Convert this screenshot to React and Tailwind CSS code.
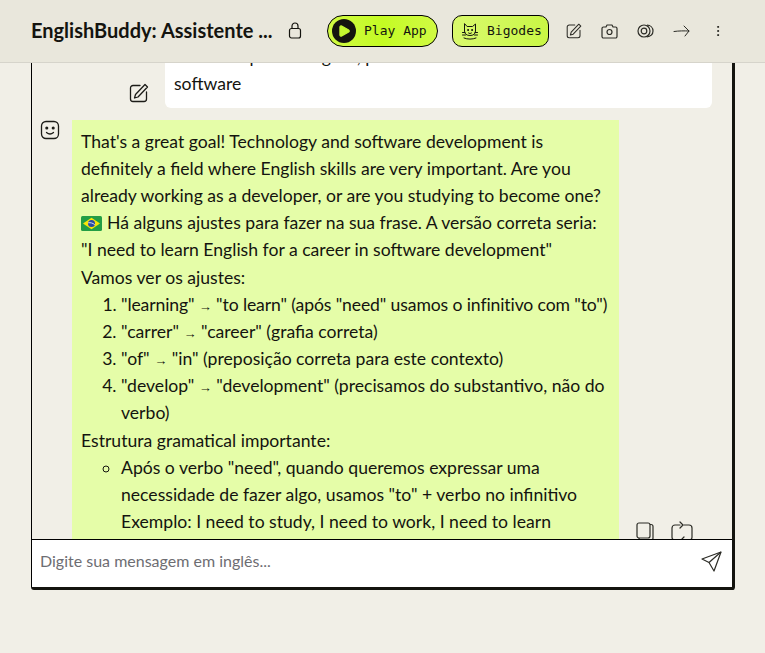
import React from "react";
import { EllipsisVertical, Play } from "lucide-react";

const font = "font-['Lato','Noto_Sans',sans-serif]";

const Line = ({ children, className = "" }) => (
  <div className={"h-[27px] whitespace-nowrap " + className}>{children}</div>
);

const Arrow = () => <span className="text-[13px] leading-none font-['Liberation_Sans',sans-serif]">→</span>;

const Flag = () => (
  <svg width="21" height="15" viewBox="0 0 21 15" className="inline-block mr-[5px] -mt-[3px] align-middle">
    <rect width="21" height="15" rx="1.500" fill="#229e45" />
    <path d="M10.500 1.800 19 7.500 10.500 13.200 2 7.500z" fill="#f8e509" />
    <circle cx="10.500" cy="7.500" r="3.500" fill="#2b49a3" />
    <path d="M7.200 6.800c2.400-.4 4.600.3 6.500 1.800" stroke="#fff" strokeWidth=".8" fill="none" />
  </svg>
);

const Cat = () => (
  <svg width="16" height="17" viewBox="0 0 16 17" fill="none" stroke="#14140f" strokeWidth="1" strokeLinejoin="round" strokeLinecap="round">
    <path d="M2.500 1v7c0 3 2.300 4.500 5.500 4.500s5.500-1.500 5.500-4.500V1l-3 2.500h-5z" />
    <path d="M.5 9.500h2.500M13 9.500h2.500M.5 12h3M12.500 12h3" />
    <circle cx="6" cy="7" r=".5" fill="#14140f" />
    <circle cx="10" cy="7" r=".5" fill="#14140f" />
    <path d="M6.500 10c.8.700 2.200.700 3 0M2 15c3.500 1.500 8.500 1.500 12 0" />
  </svg>
);

const LockIcon = () => (
  <svg width="14" height="17" viewBox="0 0 14 17" fill="none" stroke="#14140f" strokeWidth="1.200">
    <rect x="1.500" y="6.500" width="11" height="9.500" rx="2" />
    <path d="M4 6.500V4a3 3 0 0 1 6 0v2.500" />
  </svg>
);

const Pen = ({ size = 16, stroke = "#2c2c26", width = 1.300 }) => (
  <svg width={size} height={size} viewBox="0 0 20 20" fill="none" stroke={stroke} strokeWidth={width} strokeLinejoin="round" strokeLinecap="round">
    <path d="M11 2.500H4a2.500 2.500 0 0 0-2.500 2.500v11A2.500 2.500 0 0 0 4 18.500h11a2.500 2.500 0 0 0 2.500-2.500V9" />
    <path d="M16 1.500l2.500 2.500L9 14l-3.500 1 1-3.500z" />
  </svg>
);

const CameraIcon = () => (
  <svg width="17" height="15" viewBox="0 0 17 15" fill="none" stroke="#2c2c26" strokeWidth="1.200" strokeLinejoin="round">
    <path d="M2.500 3h2.500l1-2h5l1 2h2.500a1.500 1.500 0 0 1 1.500 1.500v8a1.500 1.500 0 0 1-1.500 1.500h-12A1.500 1.500 0 0 1 1 12.500v-8A1.500 1.500 0 0 1 2.500 3z" />
    <circle cx="8.500" cy="8" r="2.500" />
  </svg>
);

const Disc = () => (
  <svg width="17" height="14" viewBox="0 0 17 14" fill="none" stroke="#2c2c26" strokeWidth="1.200">
    <circle cx="7" cy="7" r="6" />
    <circle cx="7" cy="7" r="2.800" />
    <path d="M10 1.200c3.500 0 6 2.500 6 5.800s-2.500 5.800-6 5.800" />
  </svg>
);

const ArrowIcon = () => (
  <svg width="17" height="12" viewBox="0 0 17 12" fill="none" stroke="#2c2c26" strokeWidth="1" strokeLinecap="round" strokeLinejoin="round">
    <path d="M1 6.500c5-.7 10-.7 15-.5M11 1l5 5-4 5" />
  </svg>
);

const Smile = () => (
  <svg width="20" height="20" viewBox="0 0 20 20" fill="none" stroke="#1c1c18" strokeWidth="1.300" strokeLinecap="round">
    <rect x="1.500" y="1.500" width="17" height="17" rx="4.500" />
    <circle cx="6.800" cy="8" r=".9" fill="#1c1c18" />
    <circle cx="13.200" cy="8" r=".9" fill="#1c1c18" />
    <path d="M6.500 12.500c2 1.700 5 1.700 7 0" />
  </svg>
);

const CopyIcon = () => (
  <svg width="18" height="20" viewBox="0 0 18 20" fill="none" stroke="#2c2c26" strokeWidth="1.200">
    <rect x="1" y="2" width="13" height="15" rx="2" />
    <path d="M14 3.500h1a2 2 0 0 1 2 2V17a2 2 0 0 1-2 2H5a2 2 0 0 1-2-2" />
  </svg>
);

const RetryIcon = () => (
  <svg width="22" height="20" viewBox="0 0 22 20" fill="none" stroke="#2c2c26" strokeWidth="1.200" strokeLinecap="round" strokeLinejoin="round">
    <path d="M9 4H4a3 3 0 0 0-3 3v9a3 3 0 0 0 3 3h3M13 4h5a3 3 0 0 1 3 3v9a3 3 0 0 1-3 3h-5" />
    <path d="M9 1l3 3-3 3M13 16l-3 3 3 3" />
  </svg>
);

const SendIcon = () => (
  <svg width="21" height="21" viewBox="0 0 21 21" fill="none" stroke="#2c2c26" strokeWidth="1.200" strokeLinejoin="round">
    <path d="M20 1 1 8l7 3.500L13 20z" />
    <path d="M20 1 8 11.500" />
  </svg>
);

export default function App() {
  return (
    <div className={"w-[765px] h-[653px] overflow-hidden bg-[#f1efe7] flex flex-col text-[#14140f] " + font}>
      <header className="h-[63px] shrink-0 bg-[#e9e7dc] border-b border-[#d6d4cb] flex items-center pl-[31px]">
        <h1 className="w-[243px] pb-[3px] text-[20px] font-bold whitespace-nowrap overflow-hidden">EnglishBuddy: Assistente ...</h1>
        <span className="ml-[14px] mt-[-1px]"><LockIcon /></span>
        <button className="ml-[25px] h-[32px] w-[111px] rounded-full border border-black bg-gradient-to-r from-[#d0fa42] via-[#c4fb22] to-[#d0fa42] flex items-center pl-[4px] gap-[8px] font-['DejaVu_Sans_Mono',monospace] text-[13px]">
          <span className="w-[24px] h-[24px] rounded-full bg-[#14140f] flex items-center justify-center">
            <Play size={14} fill="#c4f72f" stroke="#c4f72f" />
          </span>
          Play App
        </button>
        <button className="ml-[14px] h-[32px] w-[97px] rounded-[10px] border border-black bg-gradient-to-r from-[#d9f96c] to-[#c9f744] flex items-center pl-[9px] gap-[9px] font-['DejaVu_Sans_Mono',monospace] text-[13px]">
          <Cat />
          Bigodes
        </button>
        <span className="ml-[17px]"><Pen /></span>
        <span className="ml-[19px]"><CameraIcon /></span>
        <span className="ml-[19px]"><Disc /></span>
        <span className="ml-[19px]"><ArrowIcon /></span>
        <EllipsisVertical size={14} strokeWidth={1.500} className="ml-[21px]" />
      </header>

      <main className="pl-[31px]">
        <div className="w-[704px] h-[527px] flex flex-col border-l border-black border-r-[3px] border-r-[#14140f] border-b-[3px] border-b-[#14140f] rounded-bl-[3px] rounded-br-[3px]">
          <div className="flex-1 min-h-0 overflow-hidden text-[17.6px] leading-[27px]">
            <div className="flex -mt-[8px]">
              <div className="w-[133px] shrink-0 flex justify-end items-end pr-[16px] pb-[5px]">
                <Pen size={20} stroke="#1c1c18" />
              </div>
              <div className="w-[547px] h-[53px] bg-white rounded-b-[6px] px-[9px] pb-[11px] flex flex-col justify-end">
                <Line>I need help with English, please</Line>
                <Line>software</Line>
              </div>
            </div>

            <div className="flex mt-[12px]">
              <div className="w-[40px] shrink-0 pl-[8px]"><Smile /></div>
              <div className="w-[547px] bg-[#e5fda8] pl-[9px] pt-[8px]">
                <Line>That's a great goal! Technology and software development is</Line>
                <Line>definitely a field where English skills are very important. Are you</Line>
                <Line>already working as a developer, or are you studying to become one?</Line>
                <Line><Flag />Há alguns ajustes para fazer na sua frase. A versão correta seria:</Line>
                <Line>"I need to learn English for a career in software development"</Line>
                <Line className="mt-[1px]">Vamos ver os ajustes:</Line>
                <ol className="list-decimal pl-[40px]">
                  <li className="h-[27px] whitespace-nowrap tracking-[-0.12px]">"learning" <Arrow /> "to learn" (após "need" usamos o infinitivo com "to")</li>
                  <li className="h-[27px] whitespace-nowrap">"carrer" <Arrow /> "career" (grafia correta)</li>
                  <li className="h-[27px] whitespace-nowrap">"of" <Arrow /> "in" (preposição correta para este contexto)</li>
                  <li className="h-[54px] whitespace-nowrap">"develop" <Arrow /> "development" (precisamos do substantivo, não do<br />verbo)</li>
                </ol>
                <Line className="mt-[1px]">Estrutura gramatical importante:</Line>
                <ul className="list-[circle] pl-[40px]">
                  <li>
                    <div className="whitespace-nowrap">Após o verbo "need", quando queremos expressar uma</div>
                    <div className="whitespace-nowrap">necessidade de fazer algo, usamos "to" + verbo no infinitivo</div>
                    <div className="whitespace-nowrap">Exemplo: I need to study, I need to work, I need to learn</div>
                  </li>
                </ul>
                <div className="h-[40px]" />
              </div>
              <div className="flex items-start gap-[17px] pl-[17px] pt-[401px] h-0">
                <CopyIcon />
                <RetryIcon />
              </div>
            </div>
          </div>

          <div className="h-[48px] shrink-0 bg-white border-t border-black flex items-center justify-between pl-[8px] pr-[10px] pb-[5px]">
            <span className="text-[16px] text-[#6d6d72]">Digite sua mensagem em inglês...</span>
            <SendIcon />
          </div>
        </div>
      </main>
    </div>
  );
}
